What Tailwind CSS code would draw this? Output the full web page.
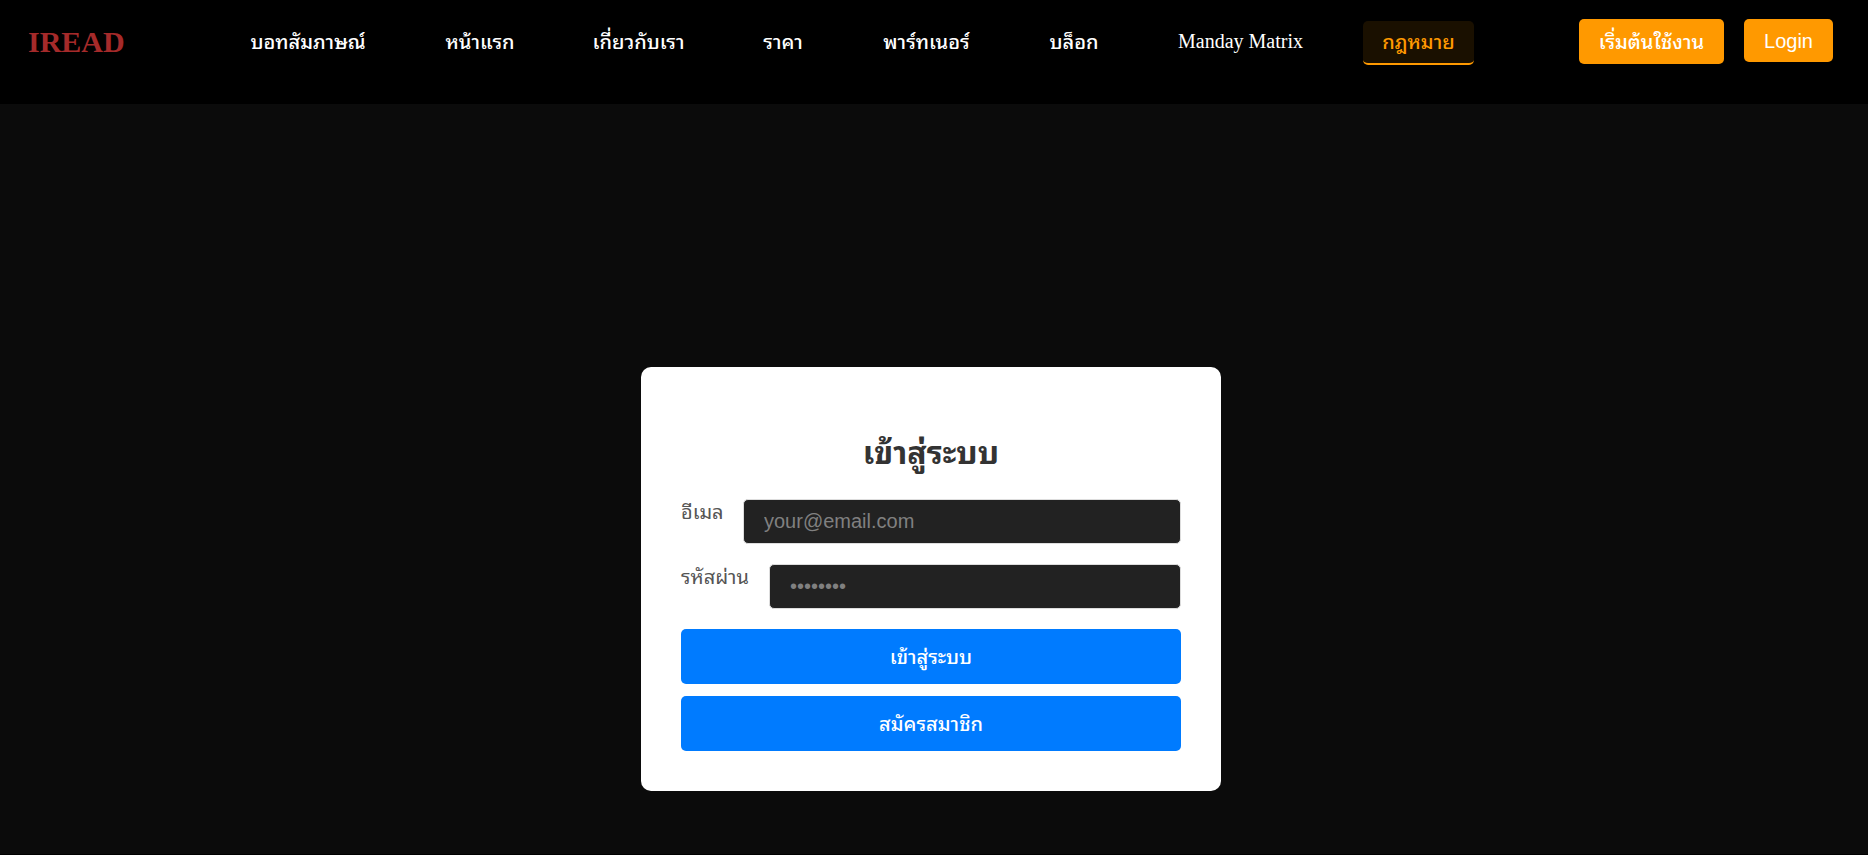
<!DOCTYPE html>
<html lang="th">
<head>
<meta charset="utf-8">
<meta name="viewport" content="width=device-width, initial-scale=1">
<title>IREAD</title>
<script src="https://cdn.jsdelivr.net/npm/@tailwindcss/browser@4"></script>
</head>
<body class="flex min-h-screen flex-col border-b border-black bg-[#0b0b0b] font-['Liberation_Serif','Noto_Sans_Thai_Looped','Noto_Sans_Thai',sans-serif] text-xl leading-6 text-white">
  <header class="flex min-h-[104px] items-start bg-black pl-7 pr-[35px] pt-[19px]">
    <a href="#" class="mr-[106px] w-24 pt-[5px] text-[30px] leading-9 font-bold text-[#a52a2a]">IREAD</a>
    <nav class="flex gap-10 pt-[2px] whitespace-nowrap">
      <a href="#" class="w-[156px] py-[9px] text-center font-medium">บอทสัมภาษณ์</a>
      <a href="#" class="w-[108px] py-[9px] text-center font-medium">หน้าแรก</a>
      <a href="#" class="w-[129px] py-[9px] text-center font-medium">เกี่ยวกับเรา</a>
      <a href="#" class="w-[80px] py-[9px] text-center font-medium">ราคา</a>
      <a href="#" class="w-[127px] py-[9px] text-center font-medium">พาร์ทเนอร์</a>
      <a href="#" class="w-[88px] py-[9px] text-center font-medium">บล็อก</a>
      <a href="#" class="w-[165px] py-2 text-center">Manday Matrix</a>
      <a href="#" class="h-11 w-[111px] rounded-[5px] border-b-2 border-[#ff9900] bg-[#1a1000] py-[9px] text-center font-medium text-[#ff9900]">กฎหมาย</a>
    </nav>
    <div class="ml-auto flex items-start gap-5 font-['Liberation_Sans','Noto_Sans_Thai_Looped','Noto_Sans_Thai',sans-serif] whitespace-nowrap">
      <button class="h-[45px] w-[145px] rounded-[5px] bg-[#ff9900] text-center font-medium">เริ่มต้นใช้งาน</button>
      <button class="h-[43px] w-[89px] rounded-[5px] bg-[#ff9900] text-center">Login</button>
    </div>
  </header>
  <main class="flex flex-1 flex-col items-center justify-end pr-[6px] pb-[63px]">
    <form class="w-full max-w-[580px] rounded-[10px] bg-white px-10 pt-[66px] pb-10 text-[#555]">
      <h2 class="mb-[26px] text-center text-[32px] leading-10 font-bold text-[#333]">เข้าสู่ระบบ</h2>
      <div class="mb-5 flex items-start gap-5">
        <label for="email" class="w-[42px] pt-px whitespace-nowrap">อีเมล</label>
        <input id="email" type="email" placeholder="your@email.com" class="h-[45px] min-w-0 flex-1 rounded-[5px] border border-[#ddd] bg-[#222] px-5 font-['Liberation_Sans',sans-serif] text-white placeholder:text-[#808080]">
      </div>
      <div class="mb-5 flex items-start gap-5">
        <label for="password" class="w-[68px] pt-px whitespace-nowrap">รหัสผ่าน</label>
        <input id="password" type="password" placeholder="••••••••" class="h-[45px] min-w-0 flex-1 rounded-[5px] border border-[#ddd] bg-[#222] px-5 font-['Liberation_Sans',sans-serif] text-white placeholder:text-[#808080]">
      </div>
      <button type="submit" class="mb-3 block h-[55px] w-full rounded-[5px] bg-[#007bff] font-medium text-white">เข้าสู่ระบบ</button>
      <button type="button" class="block h-[55px] w-full rounded-[5px] bg-[#007bff] font-medium text-white">สมัครสมาชิก</button>
    </form>
  </main>
</body>
</html>
